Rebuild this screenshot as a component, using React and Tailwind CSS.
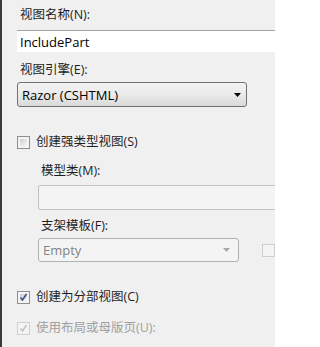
import React from "react";

const font = { fontFamily: '"Open Sans", "Noto Sans CJK SC", sans-serif' };

function Check({ checked, disabled }) {
  return (
    <span
      className={`relative inline-block w-[13px] h-[13px] border shrink-0 ${
        disabled ? "border-[#cfcfcf] bg-[#f4f4f4]" : "border-[#8e8f8f] bg-[#f4f4f4]"
      }`}
    >
      <span
        className={`absolute inset-[2px] ${
          disabled ? "bg-[#f4f4f4]" : "bg-gradient-to-br from-[#cfcfcf] to-[#f6f6f6]"
        }`}
      />
      {checked && (
        <svg className="absolute inset-0" width="11" height="11" viewBox="0 0 11 11">
          <path
            d="M2.5 5.5 L4.5 8 L8.5 2"
            fill="none"
            stroke={disabled ? "#c2c2c2" : "#3d4f8f"}
            strokeWidth="1.6"
          />
        </svg>
      )}
    </span>
  );
}

function Arrow({ color }) {
  return (
    <svg width="7" height="4" viewBox="0 0 7 4">
      <path d="M0 0 H7 L3.5 4 Z" fill={color} />
    </svg>
  );
}

export default function App() {
  return (
    <div
      className="w-[275px] h-[347px] overflow-hidden bg-[#f0f0f0] border-l-2 border-[#3a3a3a] text-[12.5px] leading-[16px] text-[#1e1e1e]"
      style={font}
    >
      <div className="pl-[18px] pt-[7px]">视图名称(N):</div>

      {/* view name */}
      <div className="ml-[15px] mt-[7px] h-[22px] w-[300px] bg-white border-t border-[#a0a0a0] flex items-center pl-[3px] text-[13px] text-black">
        IncludePart
      </div>

      <div className="pl-[18px] mt-[10px]">视图引擎(E):</div>

      {/* engine dropdown */}
      <div className="ml-[15px] mt-[4px] h-[25px] w-[230px] rounded-[3px] border border-[#707070] bg-gradient-to-b from-[#f2f2f2] via-[#ebebeb] to-[#d9d9d9] flex items-center justify-between pl-[4px] pr-[5px] text-[13px] text-black">
        <span>Razor (CSHTML)</span>
        <Arrow color="#000" />
      </div>

      {/* strongly typed */}
      <div className="ml-[15px] mt-[27px] flex items-center gap-[6px]">
        <Check />
        <span>创建强类型视图(S)</span>
      </div>

      <div className="pl-[39px] mt-[13px]">模型类(M):</div>
      <div className="ml-[36px] mt-[6px] h-[25px] w-[260px] rounded-[2px] border border-[#c3c3c3] bg-[#f4f4f4]" />

      <div className="pl-[39px] mt-[8px]">支架模板(F):</div>
      <div className="mt-[4px] flex items-center">
        <div className="ml-[36px] h-[24px] w-[207px] rounded-[3px] border border-[#adb2b5] bg-[#f4f4f4] flex items-center justify-between pl-[4px] pr-[8px] text-[13px] text-[#838383]">
          <span>Empty</span>
          <Arrow color="#a8a8a8" />
        </div>
        <div className="ml-[23px] w-[13px] h-[13px] border border-[#cfcfcf] bg-[#f4f4f4] shrink-0" />
      </div>

      {/* partial view */}
      <div className="ml-[15px] mt-[27px] flex items-center gap-[6px]">
        <Check checked />
        <span>创建为分部视图(C)</span>
      </div>

      <div className="ml-[15px] mt-[15px] flex items-center gap-[6px] text-[#a0a0a0]">
        <Check checked disabled />
        <span>使用布局或母版页(U):</span>
      </div>

      <div className="ml-[36px] mt-[13px] h-[24px] w-[260px] rounded-[2px] border border-[#adb2b5] bg-[#f4f4f4]" />
    </div>
  );
}
